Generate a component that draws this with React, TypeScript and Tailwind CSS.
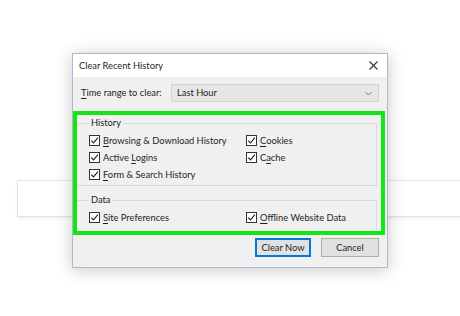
import React from 'react';

function Check() {
  return (
    <span className="flex h-[11px] w-[11px] shrink-0 items-center justify-center border border-[#333333] bg-white">
      <svg width="9" height="9" viewBox="0 0 9 9">
        <path d="M1.2 4.6 L3.5 6.9 L7.9 1.6" fill="none" stroke="#222222" strokeWidth="1.1" />
      </svg>
    </span>
  );
}

function Item({ pre, u, post }: { pre?: string; u: string; post: string }) {
  return (
    <div className="flex h-[17px] items-center gap-[3px] whitespace-nowrap">
      <Check />
      <span>
        {pre}
        <span className="underline underline-offset-2">{u}</span>
        {post}
      </span>
    </div>
  );
}

export default function App() {
  return (
    <div
      className="relative h-[316px] w-[460px] overflow-hidden whitespace-nowrap bg-white text-[9.3px] leading-[14px] text-[#1e1e1e]"
      style={{ fontFamily: 'Lato, "Noto Sans", sans-serif' }}
    >
      {/* page content behind the dialog */}
      <div className="ml-[17px] mt-[180px] h-[37px] border border-r-0 border-[#e4e4e4] bg-white shadow-[0_1px_3px_rgba(0,0,0,0.08)]" />

      {/* dialog */}
      <div className="absolute left-[72px] top-[53px] w-[316px] border border-[#a9b9d3] bg-[#f0f0f0] shadow-[0_2px_16px_rgba(0,0,0,0.22)]">
        <div className="flex h-[23px] items-center justify-between bg-white pl-[6px] pr-[9px]">
          <span>Clear Recent History</span>
          <svg width="9" height="9" viewBox="0 0 9 9">
            <path d="M0.5 0.5 L8.5 8.5 M8.5 0.5 L0.5 8.5" stroke="#333333" strokeWidth="1.1" />
          </svg>
        </div>

        <div className="flex items-center pl-[8px] pr-[8px] pt-[7px]">
          <span className="w-[90px]">
            <span className="underline underline-offset-2">T</span>ime range to clear:
          </span>
          <div className="flex h-[18px] flex-1 items-center justify-between border border-[#d2d2d2] bg-[#e6e6e6] pl-[5px] pr-[6px]">
            <span>Last Hour</span>
            <svg width="7" height="5" viewBox="0 0 7 5">
              <path d="M0.5 1 L3.5 4 L6.5 1" fill="none" stroke="#777777" strokeWidth="1" />
            </svg>
          </div>
        </div>

        <div className="relative mt-[9px] h-[123px] pl-[3px] pr-[10px] pt-[5px]">
          <fieldset className="h-[70px] border border-[#d9d9d9] px-0 pb-0 pt-[2px]">
            <legend className="ml-[12px] px-[2px]">History</legend>
            <div className="grid grid-cols-[157px_1fr] pl-[12px]">
              <Item u="B" post="rowsing & Download History" />
              <Item u="C" post="ookies" />
              <Item pre="Active " u="L" post="ogins" />
              <Item pre="C" u="a" post="che" />
              <Item u="F" post="orm & Search History" />
            </div>
          </fieldset>

          <fieldset className="mt-[7px] h-[41px] border border-[#d9d9d9] px-0 pb-0 pt-[2px]">
            <legend className="ml-[12px] px-[2px]">Data</legend>
            <div className="grid grid-cols-[157px_1fr] pl-[12px]">
              <Item u="S" post="ite Preferences" />
              <Item u="O" post="ffline Website Data" />
            </div>
          </fieldset>

          {/* highlight annotation */}
          <div className="pointer-events-none absolute left-0 top-0 h-[124px] w-[312px] border-4 border-[#15e415]" />
        </div>

        <div className="flex justify-end gap-[10px] pb-[10px] pr-[8px] pt-[4px]">
          <button className="h-[19px] w-[56px] border-2 border-[#0078d7] bg-[#e1e1e1]">Clear Now</button>
          <button className="h-[19px] w-[58px] border border-[#adadad] bg-[#e1e1e1]">Cancel</button>
        </div>
      </div>
    </div>
  );
}
